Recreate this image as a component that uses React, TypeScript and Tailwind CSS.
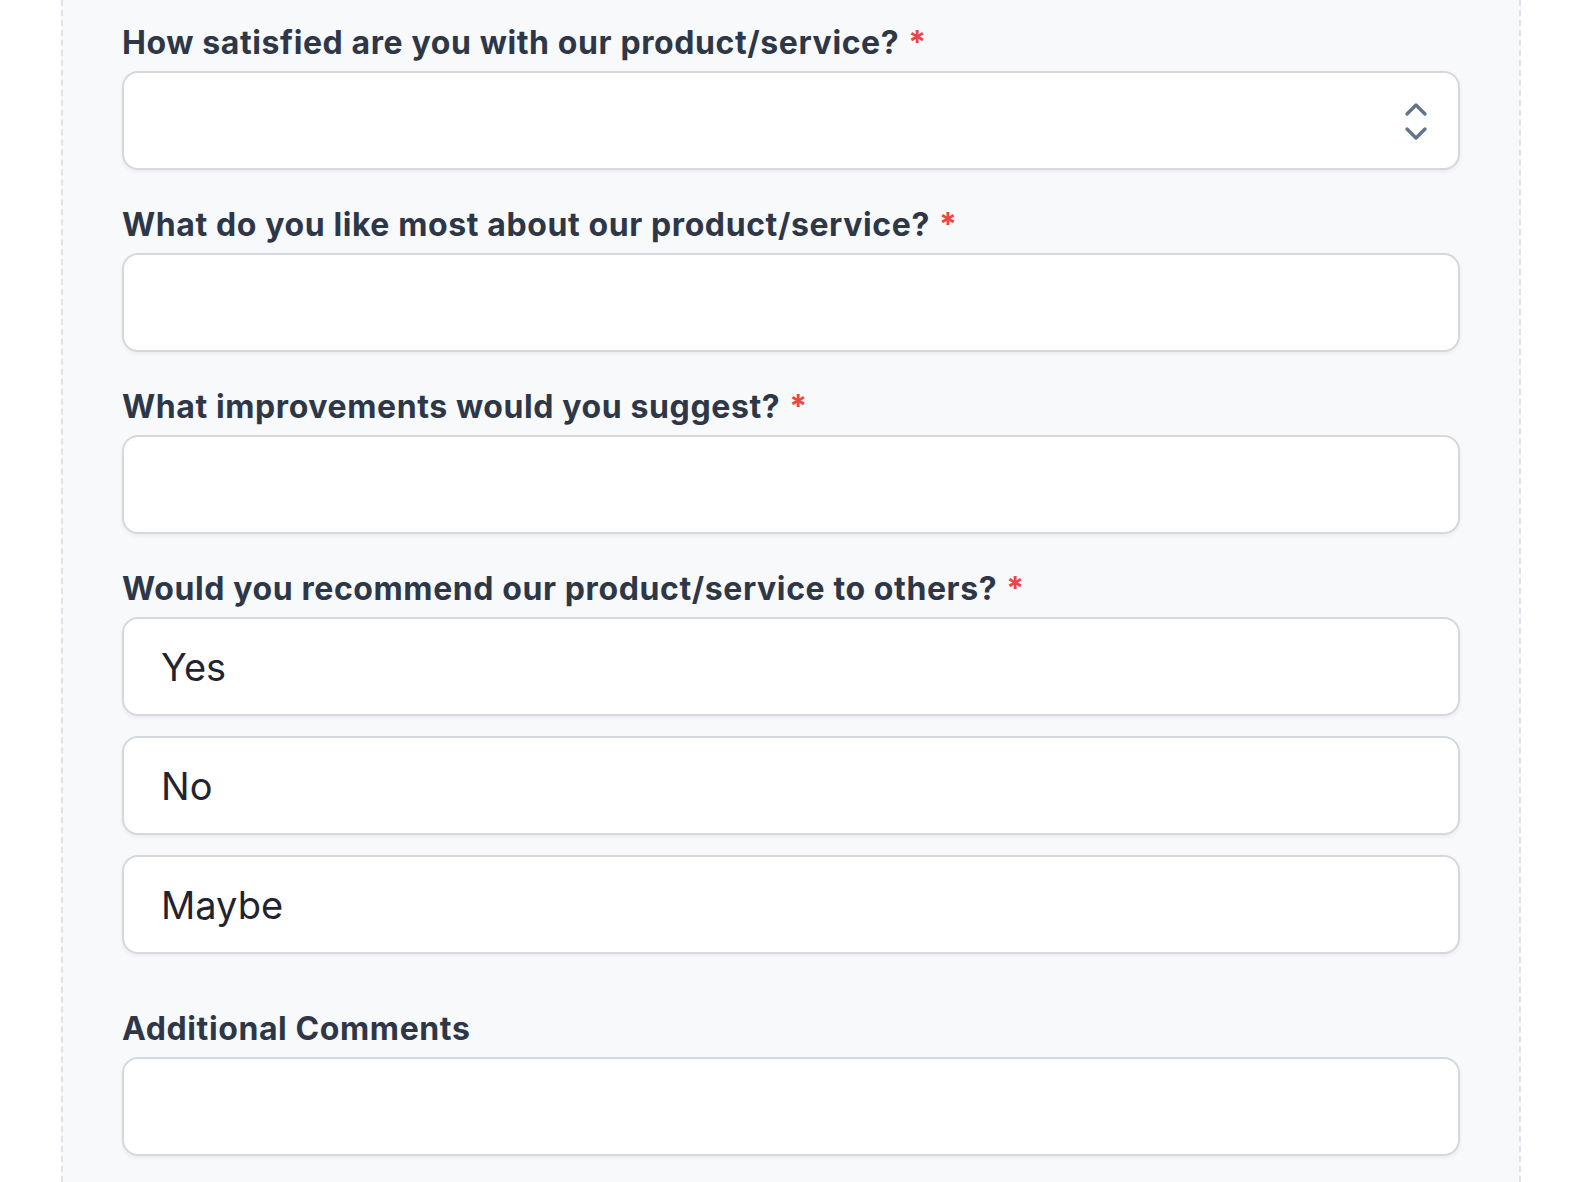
import { memo } from 'react'

const fieldBox =
  'h-[99px] w-full rounded-2xl border-2 border-[#d5d8dd] bg-white shadow-[0_2px_4px_rgba(15,23,42,0.06)]'

interface FieldLabelProps {
  text: string
  required?: boolean
}

const FieldLabel = memo(({ text, required }: FieldLabelProps) => {
  return (
    <label className="block text-[32px] font-bold leading-[48px] tracking-[0.6px] text-[#2d3748]">
      {text}
      {required && <span className="ml-[9px] text-[#ef4444]">*</span>}
    </label>
  )
})

FieldLabel.displayName = 'FieldLabel'

const ChevronsUpDown = () => (
  <svg width="24" height="40" viewBox="0 0 24 40" fill="none" stroke="#64748b" strokeWidth="3.4" strokeLinecap="round" strokeLinejoin="round">
    <path d="M3 13 12 4l9 9" />
    <path d="m3 28 9 9 9-9" />
  </svg>
)

const options = ['Yes', 'No', 'Maybe']

export default function App() {
  return (
    <div className="min-h-[1182px] w-full bg-white font-['Inter','Noto_Sans',sans-serif]">
      <div className="ml-[61px] w-[1460px] min-h-[1182px] border-x-2 border-dashed border-[#dfe2e6] bg-[#f8f9fb] px-[59px] pt-[19px]">
        <div className="flex flex-col gap-[31px]">
          {/* 满意度 */}
          <div className="flex flex-col gap-[4px]">
            <FieldLabel text="How satisfied are you with our product/service?" required />
            <div className={`${fieldBox} flex items-center justify-end pr-[30px]`}>
              <ChevronsUpDown />
            </div>
          </div>

          <div className="flex flex-col gap-[4px]">
            <FieldLabel text="What do you like most about our product/service?" required />
            <div className={fieldBox} />
          </div>

          <div className="flex flex-col gap-[4px]">
            <FieldLabel text="What improvements would you suggest?" required />
            <div className={fieldBox} />
          </div>

          {/* 推荐选项 */}
          <div className="flex flex-col gap-[4px]">
            <FieldLabel text="Would you recommend our product/service to others?" required />
            <div className="flex flex-col gap-[20px]">
              {options.map((opt) => (
                <div key={opt} className={`${fieldBox} flex items-center pl-[37px]`}>
                  <span className="text-[38px] leading-none text-[#1f2430]">{opt}</span>
                </div>
              ))}
            </div>
          </div>

          <div className="mt-[20px] flex flex-col gap-[4px]">
            <FieldLabel text="Additional Comments" />
            <div className={fieldBox} />
          </div>
        </div>
      </div>
    </div>
  )
}
